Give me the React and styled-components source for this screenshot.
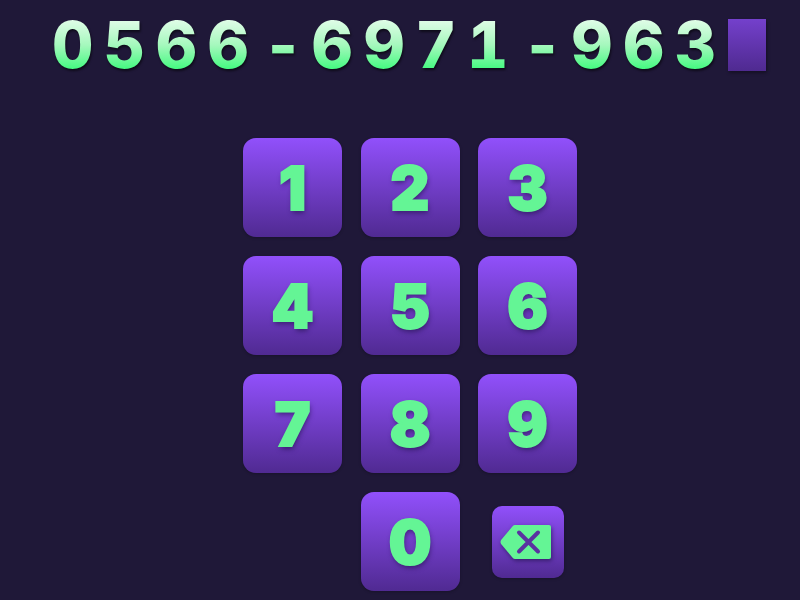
import styled, { createGlobalStyle } from 'styled-components';

const keys = ['1', '2', '3', '4', '5', '6', '7', '8', '9'];

const App = () => {
  return (
    <Page>
      <GlobalStyle />
      <Display>
        <DisplayGroup>
          <Number>0566</Number>
          <Dash>-</Dash>
          <Number>6971</Number>
          <Dash>-</Dash>
          <Number>963</Number>
        </DisplayGroup>
        <Cursor />
      </Display>
      <Pad>
        {keys.map((key) => (
          <Key key={key}>
            <KeyLabel>{key}</KeyLabel>
          </Key>
        ))}
        <ZeroKey>
          <KeyLabel>0</KeyLabel>
        </ZeroKey>
        <BackKey aria-label="backspace">
          <BackIcon viewBox="0 0 52 36">
            <path
              d="M15 1H49a2 2 0 0 1 2 2v30a2 2 0 0 1-2 2H15a3 3 0 0 1-2.2-1L1.5 20.5a4 4 0 0 1 0-5L12.8 2a3 3 0 0 1 2.2-1z"
              fill="#64f595"
            />
            <path
              d="M19 8.5l19 19M38 8.5l-19 19"
              stroke="#5a32a0"
              strokeWidth="4"
              strokeLinecap="round"
              fill="none"
            />
          </BackIcon>
        </BackKey>
      </Pad>
    </Page>
  );
};

const GlobalStyle = createGlobalStyle`
  html, body {
    margin: 0;
    padding: 0;
    background: #1f1838;
  }
`;

const Page = styled.div`
  width: 800px;
  height: 600px;
  overflow: hidden;
  display: flex;
  flex-direction: column;
  background: #1f1838;
`;

const Display = styled.div`
  height: 52px;
  margin-top: 19px;
  padding-left: 52px;
  display: flex;
  align-items: center;
`;

const DisplayGroup = styled.div`
  width: 676px;
  display: flex;
  align-items: center;
  filter: drop-shadow(1px 2px 1px rgba(0, 0, 0, 0.55));
`;

const Number = styled.span`
  font-family: 'Inter', 'Liberation Sans', sans-serif;
  font-size: 64px;
  font-weight: 800;
  font-variant-numeric: tabular-nums;
  line-height: 72px;
  height: 72px;
  letter-spacing: 10.5px;
  background: linear-gradient(180deg, #e2fde9 14%, #a5f8bd 50%, #3dfa7c 86%);
  background-clip: text;
  -webkit-background-clip: text;
  color: transparent;
`;

const Dash = styled(Number)`
  margin: 0 8px 0 3px;
  letter-spacing: 0;
`;

const Cursor = styled.div`
  width: 38px;
  height: 52px;
  background: linear-gradient(180deg, #7440cc 0%, #4f2a90 100%);
  box-shadow: 1px 2px 3px rgba(0, 0, 0, 0.35);
`;

const Pad = styled.div`
  margin: 67px 0 0 243px;
  display: grid;
  grid-template-columns: repeat(3, 99px);
  grid-auto-rows: 99px;
  column-gap: 18.5px;
  row-gap: 19px;
`;

const Key = styled.button`
  border: 0;
  padding: 0;
  border-radius: 13px;
  display: flex;
  align-items: center;
  justify-content: center;
  background: linear-gradient(180deg, #9150fb 0%, #502a92 100%);
  box-shadow: 0 1px 3px rgba(0, 0, 0, 0.25);
`;

const ZeroKey = styled(Key)`
  grid-column: 2;
`;

const BackKey = styled(Key)`
  width: 72px;
  height: 72px;
  place-self: center;
  border-radius: 10px;
`;

const KeyLabel = styled.span`
  font-family: 'Inter', 'Liberation Sans', sans-serif;
  font-size: 60px;
  font-weight: 900;
  line-height: 1;
  color: #64f595;
  -webkit-text-stroke: 2px #64f595;
  text-shadow: 1px 3px 5px rgba(30, 15, 70, 0.6);
`;

const BackIcon = styled.svg`
  width: 52px;
  height: 36px;
  margin-right: 3px;
  filter: drop-shadow(1px 2px 2px rgba(30, 15, 70, 0.6));
`;

export default App;
